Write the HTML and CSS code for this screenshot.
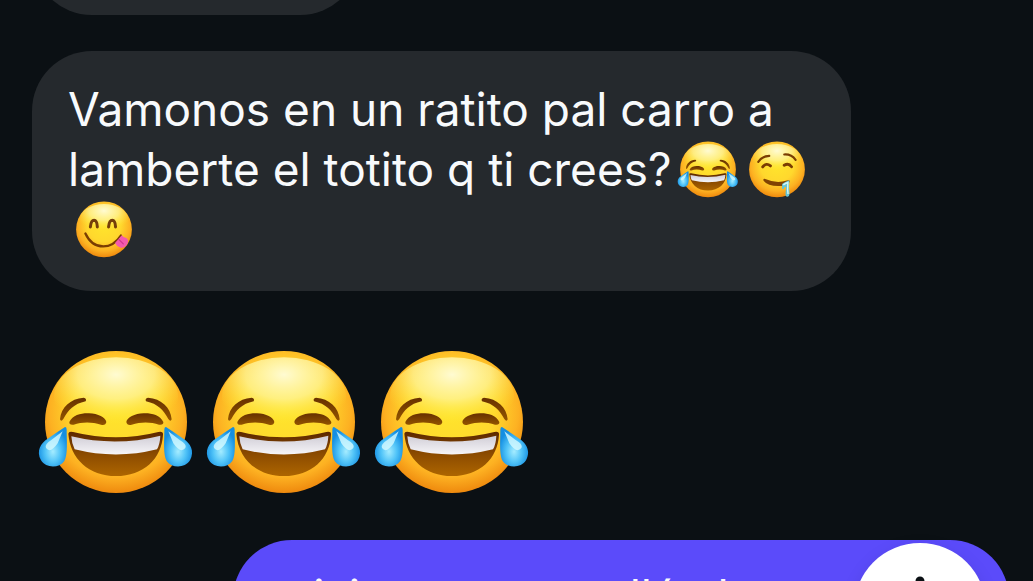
FILE: index.html
```html
<!DOCTYPE html>
<html lang="es">
<head>
  <meta charset="UTF-8">
  <meta name="viewport" content="width=device-width, initial-scale=1">
  <title>Chat</title>
  <link rel="stylesheet" href="styles.css">
</head>
<body>
  <!-- shared emoji shapes -->
  <svg class="defs" aria-hidden="true">
    <defs>
      <radialGradient id="skin" cx=".5" cy=".42" r=".6">
        <stop offset="0" stop-color="#ffe52c"/>
        <stop offset=".5" stop-color="#ffd82d"/>
        <stop offset=".78" stop-color="#fdb122"/>
        <stop offset="1" stop-color="#ec820a"/>
      </radialGradient>
      <radialGradient id="shine" cx=".5" cy=".22" r=".62">
        <stop offset="0" stop-color="#fffbd2"/>
        <stop offset=".5" stop-color="#fff59a" stop-opacity=".75"/>
        <stop offset="1" stop-color="#ffe92f" stop-opacity="0"/>
      </radialGradient>
      <linearGradient id="brown" x1="0" y1="0" x2="0" y2="1">
        <stop offset="0" stop-color="#673000"/>
        <stop offset="1" stop-color="#925400"/>
      </linearGradient>
      <linearGradient id="mouth" x1="0" y1="0" x2="0" y2="1">
        <stop offset="0" stop-color="#5b2700"/>
        <stop offset=".5" stop-color="#8b4b00"/>
        <stop offset="1" stop-color="#ad6500"/>
      </linearGradient>
      <linearGradient id="teeth" x1="0" y1="0" x2="0" y2="1">
        <stop offset="0" stop-color="#d0cdd6"/>
        <stop offset="1" stop-color="#f6f5f8"/>
      </linearGradient>
      <radialGradient id="tear" cx=".5" cy=".62" r=".55">
        <stop offset="0" stop-color="#a5ecff"/>
        <stop offset=".5" stop-color="#51c4f8"/>
        <stop offset="1" stop-color="#148ee2"/>
      </radialGradient>
      <g id="face">
        <circle cx="287" cy="276" r="213" fill="url(#skin)"/>
        <ellipse cx="287" cy="200" rx="186" ry="118" fill="url(#shine)"/>
      </g>
      <symbol id="joy" viewBox="35 24 504 498">
        <use href="#face"/>
        <g fill="url(#brown)">
          <path d="M119 268C122 232 150 206 190 203Q200 205 196 214C160 222 144 240 129 267Q122 277 119 268Z"/>
          <path d="M454 268C451 232 423 206 383 203Q373 205 377 214C413 222 429 240 444 267Q451 277 454 268Z"/>
          <path d="M147 276C157 254 185 249 206 250C233 251 256 262 258 276Q256 287 242 284C213 275 184 276 160 284Q146 286 147 276Z"/>
          <path d="M429 276C419 254 391 249 370 250C343 251 320 262 318 276Q320 287 334 284C363 275 392 276 416 284Q430 286 429 276Z"/>
        </g>
        <path d="M144 311Q145 303 158 306Q288 338 414 306Q429 303 428 314C424 386 370 438 287 438C205 438 150 386 144 311Z" fill="url(#mouth)"/>
        <path d="M153 319Q287 351 420 317Q419 342 410 358Q287 389 163 358Q154 341 153 319Z" fill="url(#teeth)"/>
        <path id="drop" d="M134 291Q139 290 139 299C139 332 143 374 132 393C116 416 77 415 62 391C47 362 61 340 82 326Q111 306 134 291Z" fill="url(#tear)"/>
        <path d="M127 304L93 330Q72 343 77 354Q90 372 112 340Z" fill="#d7faff" opacity=".8"/>
        <use href="#drop" transform="matrix(-1 0 0 1 571 0)"/>
        <path d="M444 304L478 330Q501 343 495 354Q481 372 459 340Z" fill="#d7faff" opacity=".8"/>
      </symbol>
      <symbol id="drool" viewBox="35 24 504 498">
        <use href="#face"/>
        <g fill="none" stroke="#7a3d02" stroke-linecap="round">
          <path d="M144 219Q172 175 228 173M342 162Q397 158 429 204" stroke-width="16"/>
          <path d="M178 257Q205 223 237 249M342 245Q375 224 398 256" stroke-width="22"/>
        </g>
        <path d="M183 351Q188 343 203 351Q285 387 363 361Q381 354 384 364Q381 390 343 400Q225 414 184 362Z" fill="#814203"/>
        <path d="M326 388Q346 372 380 359Q382 383 379 410L383 462Q381 488 363 484Q348 478 353 452L357 413Q343 405 340 424Q330 435 325 418Z" fill="#65c4d5"/>
        <path d="M335 394Q351 382 370 376L368 428L371 464" fill="none" stroke="#d4f6f4" stroke-width="11"/>
      </symbol>
      <symbol id="yum" viewBox="35 24 504 498">
        <use href="#face"/>
        <path d="M183 257Q188 206 211 206Q234 207 236 257M322 257Q327 206 350 206Q373 207 375 257" fill="none" stroke="#75400a" stroke-width="23" stroke-linecap="round"/>
        <path d="M145 307Q190 405 281 406Q362 405 416 323" fill="none" stroke="#7a3d02" stroke-width="18" stroke-linecap="round"/>
        <path d="M371 379L422 321Q433 337 457 342Q479 355 466 386Q447 421 414 416Q385 407 371 379Z" fill="#f45aae"/>
        <path d="M400 352L434 386" stroke="#cf338e" stroke-width="9" stroke-linecap="round"/>
      </symbol>
    </defs>
  </svg>

  <main class="chat">
    <div class="bubble first"></div>
    <div class="bubble">
      Vamonos en un ratito pal carro a lamberte el totito q ti crees?<svg class="emoji" role="img" aria-label="risa"><use href="#joy"/></svg><wbr><svg class="emoji" role="img" aria-label="baba"><use href="#drool"/></svg><wbr><svg class="emoji" role="img" aria-label="rico"><use href="#yum"/></svg>
    </div>
    <div class="reaction">
      <svg class="big" role="img" aria-label="risa"><use href="#joy"/></svg>
      <svg class="big" role="img" aria-label="risa"><use href="#joy"/></svg>
      <svg class="big" role="img" aria-label="risa"><use href="#joy"/></svg>
    </div>
    <div class="bubble sent">
      crisis esa cosa allá el
      <button class="scroll" aria-label="Bajar">
        <svg viewBox="0 0 72 72"><path d="M36 8V64M12 40L36 64L60 40"/></svg>
      </button>
    </div>
  </main>
</body>
</html>
```

FILE: styles.css
```css
* { box-sizing: border-box; }

body {
  margin: 0;
  height: 100vh;
  overflow: hidden;
  background: #0b1014;
  color: #f8fafc;
  font-family: Inter, "Liberation Sans", sans-serif;
  font-size: 46px;
  line-height: 60px;
}

.defs { position: absolute; width: 0; height: 0; }

/* the list is scrolled, so the first bubble is cut by the top edge */
.chat {
  display: flex;
  flex-direction: column;
  align-items: flex-start;
  gap: 36px;
  margin-top: -105px;
  padding: 0 24px 0 32px;
}

.bubble {
  max-width: 819px;
  padding: 28px 36px 32px;
  border-radius: 60px;
  background: #25292d;
}
.first { width: 328px; height: 120px; }

.emoji {
  width: 66px;
  height: 66px;
  margin: -3px 0 -3px 3px;
  vertical-align: top;
}

.reaction { display: flex; padding-top: 11px; }
.big { width: 168px; height: 166px; }

.sent {
  position: relative;
  align-self: flex-end;
  width: 776px;
  padding-top: 26px;
  background: #5b4bfa;
}

.scroll {
  position: absolute;
  top: 3px;
  right: 23px;
  width: 132px;
  height: 132px;
  padding: 30px;
  border: 0;
  border-radius: 50%;
  background: #fff;
  box-shadow: 0 6px 18px rgba(0, 0, 0, .1);
}
.scroll svg {
  display: block;
  width: 72px;
  height: 72px;
  fill: none;
  stroke: #0b1014;
  stroke-width: 9;
  stroke-linecap: round;
  stroke-linejoin: round;
}
```
